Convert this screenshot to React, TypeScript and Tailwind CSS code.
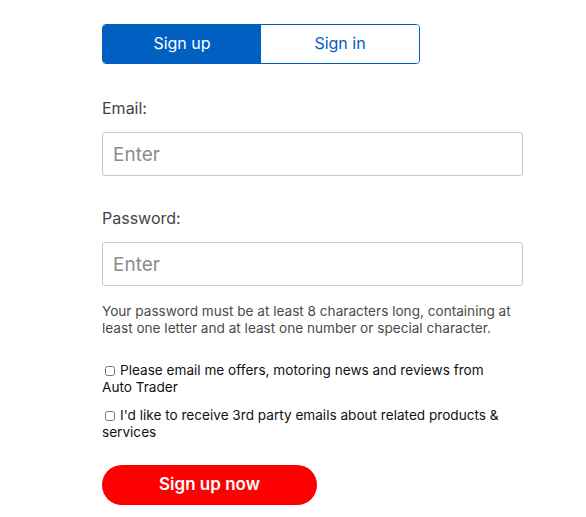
import React from "react";

export default function App() {
  const font = { fontFamily: "Inter, 'Noto Sans', sans-serif" };
  return (
    <div className="min-h-[517px] w-[586px] bg-white" style={font}>
      <div className="pl-[102px] pt-[24px] w-[523px]">
        <div className="flex h-[40px] w-[318px] overflow-hidden rounded-[4px] border border-[#0060c2]">
          <button className="flex-1 bg-[#0060c2] pb-[3px] text-[16px] text-white">Sign up</button>
          <button className="flex-1 bg-white pb-[3px] text-[16px] text-[#0060c2]">Sign in</button>
        </div>

        <label className="mt-[34px] block text-[16px] leading-[20px] text-[#444]">Email:</label>
        <input
          className="mt-[14px] block h-[44px] w-full rounded-[3px] border border-[#c8c8c8] px-[10px] text-[19px] placeholder:text-[#8c8c8c] outline-none"
          placeholder="Enter"
        />

        <label className="mt-[32px] block text-[16px] leading-[20px] text-[#444]">Password:</label>
        <input
          type="password"
          className="mt-[14px] block h-[44px] w-full rounded-[3px] border border-[#c8c8c8] px-[10px] text-[19px] placeholder:text-[#8c8c8c] outline-none"
          placeholder="Enter"
        />

        <p className="mt-[17px] text-[13.6px] leading-[17px] text-[#4a4a4a]">
          Your password must be at least 8 characters long, containing at least one letter and at least one number or special character.
        </p>

        <label className="mt-[25px] block pr-[10px] text-[13.6px] leading-[17px] text-[#111]">
          <input type="checkbox" className="ml-[3px] mr-[5px] h-[10px] w-[10px] align-[-1px]" />
          Please email me offers, motoring news and reviews from Auto Trader
        </label>
        <label className="mt-[11px] block pr-[10px] text-[13.6px] leading-[17px] text-[#111]">
          <input type="checkbox" className="ml-[3px] mr-[5px] h-[10px] w-[10px] align-[-1px]" />
          I'd like to receive 3rd party emails about related products &amp; services
        </label>

        <button className="mt-[24px] block h-[40px] w-[215px] rounded-full bg-[#ff0000] text-[17px] font-semibold text-white">
          Sign up now
        </button>
      </div>
    </div>
  );
}
